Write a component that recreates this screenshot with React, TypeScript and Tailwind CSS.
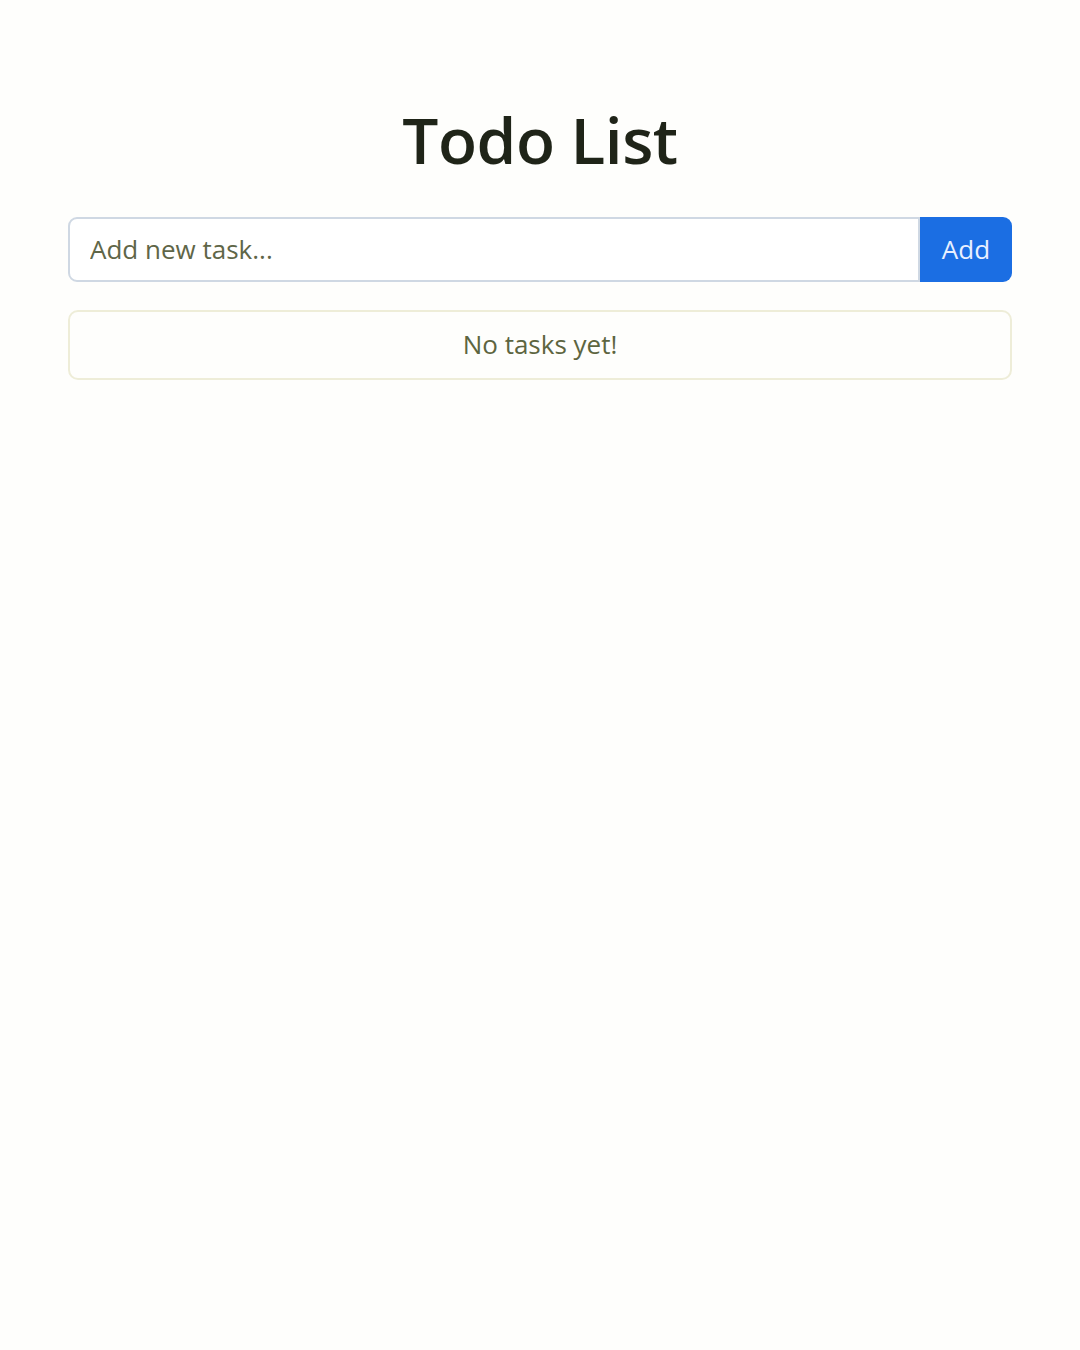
import React from "react";

export default function App() {
  return (
    <div
      className="min-h-[1350px] w-full bg-[#fefefc]"
      style={{ fontFamily: '"Open Sans", "Noto Sans", sans-serif' }}
    >
      <div className="mx-[68px] pt-[102px]">
        <h1 className="text-center text-[64px] leading-[1.2] font-semibold text-[#1f2418] tracking-[-0.5px]">
          Todo List
        </h1>
        <div className="mt-[38px] flex h-[65px]">
          <input
            className="flex-1 rounded-l-[9px] border-2 border-[#cfd8e3] bg-white px-[20px] text-[26px] text-[#212529] outline-none placeholder:text-[#5f6648]"
            placeholder="Add new task..."
          />
          <button className="w-[92px] rounded-r-[9px] bg-[#1b6ee3] text-[26px] text-[#e8f0ff]">
            Add
          </button>
        </div>
        <div className="mt-[28px] flex h-[70px] items-center justify-center rounded-[10px] border-2 border-[#eeedd8] text-[26px] text-[#5d6540]">
          No tasks yet!
        </div>
      </div>
    </div>
  );
}
